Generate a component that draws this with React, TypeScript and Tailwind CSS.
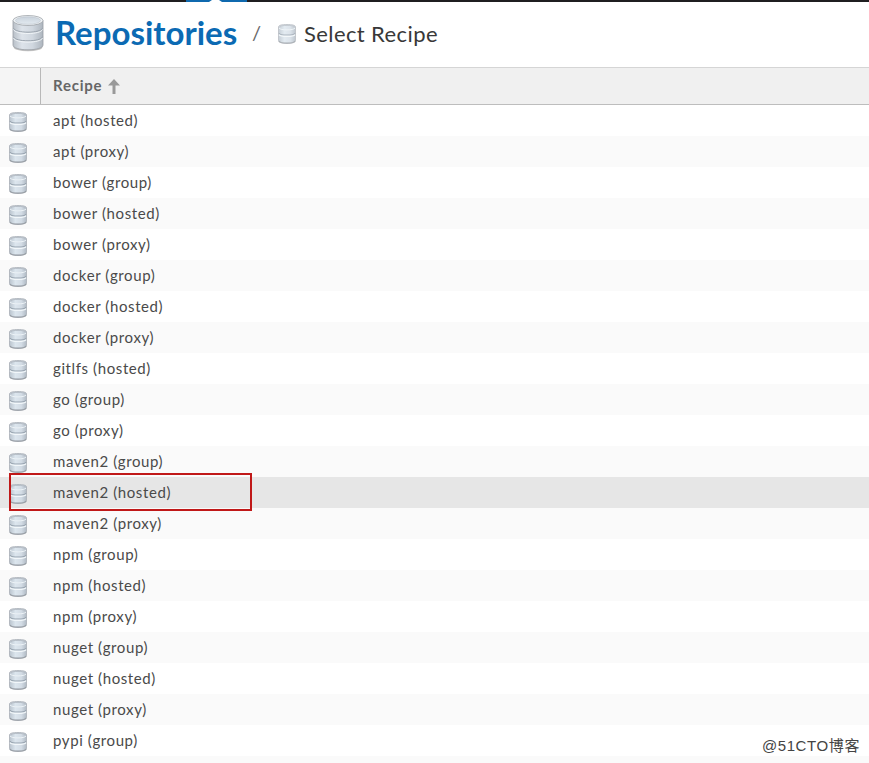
import React from 'react'

const recipes = [
  'apt (hosted)',
  'apt (proxy)',
  'bower (group)',
  'bower (hosted)',
  'bower (proxy)',
  'docker (group)',
  'docker (hosted)',
  'docker (proxy)',
  'gitlfs (hosted)',
  'go (group)',
  'go (proxy)',
  'maven2 (group)',
  'maven2 (hosted)',
  'maven2 (proxy)',
  'npm (group)',
  'npm (hosted)',
  'npm (proxy)',
  'nuget (group)',
  'nuget (hosted)',
  'nuget (proxy)',
  'pypi (group)',
]

const selected = 'maven2 (hosted)'

const DatabaseLarge: React.FC = () => (
  <svg className="h-[38px] w-8 shrink-0" viewBox="0 0 32 38" fill="none">
    <defs>
      <linearGradient id="db-side" x1="0" x2="1" y1="0" y2="0">
        <stop offset="0" stopColor="#b9c0c8" />
        <stop offset="0.3" stopColor="#dde3ea" />
        <stop offset="0.65" stopColor="#d0d7df" />
        <stop offset="1" stopColor="#adb5be" />
      </linearGradient>
      <linearGradient id="db-top" x1="0" x2="0" y1="0" y2="1">
        <stop offset="0" stopColor="#c8d2dc" />
        <stop offset="1" stopColor="#e3eaf0" />
      </linearGradient>
    </defs>
    <ellipse cx="16" cy="33" rx="14.5" ry="4.3" fill="#777" opacity="0.45" />
    <path d="M1 6.5v24.5c0 3 6.5 4.8 15 4.8s15-1.8 15-4.8V6.5z" fill="url(#db-side)" stroke="#989da3" strokeWidth="0.8" />
    <path d="M1.5 14.2c1 2.5 7 4 14.5 4s13.5-1.5 14.5-4M1.5 22.8c1 2.5 7 4 14.5 4s13.5-1.5 14.5-4" stroke="#9aa3ad" />
    <path d="M1.5 15.5c1 2.5 7 4 14.5 4s13.5-1.5 14.5-4M1.5 24.1c1 2.5 7 4 14.5 4s13.5-1.5 14.5-4" stroke="#f1f5f8" />
    <ellipse cx="16" cy="6.5" rx="15" ry="5" fill="#eef2f5" stroke="#a0a5aa" strokeWidth="0.8" />
    <ellipse cx="16" cy="6.5" rx="12.5" ry="3.7" fill="url(#db-top)" stroke="#b4bdc6" strokeWidth="0.5" />
  </svg>
)

const DatabaseSmall: React.FC<{ faded?: boolean }> = ({ faded }) => (
  <svg className={faded ? 'h-5 w-[18px] shrink-0 opacity-80' : 'h-5 w-[18px] shrink-0'} viewBox="0 0 18 20" fill="none">
    <defs>
      <linearGradient id="db-small" x1="0" x2="1" y1="0" y2="0">
        <stop offset="0" stopColor="#b9c3cd" />
        <stop offset="0.35" stopColor="#dce6ee" />
        <stop offset="0.7" stopColor="#d3dce5" />
        <stop offset="1" stopColor="#b0bac4" />
      </linearGradient>
    </defs>
    <path d="M.5 3C.5 1.2 4 .5 9 .5s8.5.7 8.5 2.5v13.5c0 2-3.5 2.9-8.5 2.9S.5 18.500.5 16.500z" fill="url(#db-small)" stroke="#a9afb6" strokeWidth="0.8" />
    <path d="M2 2.6C3.5 1.6 6 1.4 9 1.4s5.500.2 7 1.200" stroke="#b5bdc6" />
    <path d="M1 4c1 1.3 4 1.9 8 1.9S16 5.3 17 4" stroke="#edf3f7" />
    <path d="M1 9.2c.8 1.3 4 1.8 8 1.8s7.2-.5 8-1.8" stroke="#96a2ae" strokeWidth="1.2" />
    <path d="M1 10.6c.8 1.3 4 1.8 8 1.8s7.2-.5 8-1.8" stroke="#f2f7fa" strokeWidth="1.1" />
    <path d="M1 16.9c.5 1.6 3.6 2.3 8 2.3s7.5-.7 8-2.3" stroke="#989ea5" strokeWidth="1.2" />
  </svg>
)

const App: React.FC = () => {
  return (
    <div className="relative h-[763px] w-[869px] overflow-hidden bg-white font-['Lato',sans-serif] text-[#4a4a4a]">
      {/* Bottom edge of the application header */}
      <div className="flex h-0.5 bg-[#1f1e20] pl-[186px]">
        <svg className="h-0.5 w-[61px]" viewBox="0 0 61 2">
          <path d="M0 0h61v2H0z" fill="#0f69ae" />
          <path d="M26 0h7l3 2H23z" fill="#fff" />
        </svg>
      </div>

      <header className="flex h-[65px] items-center pb-[3px] pl-3">
        <DatabaseLarge />
        <h1 className="ml-[11px] w-[182px] pb-px text-[33px] leading-none font-bold whitespace-nowrap text-[#0b6ab3]">Repositories</h1>
        <span className="ml-[15px] w-2 pb-[3px] text-[20px] leading-none text-[#666]">/</span>
        <div className="ml-[18px] flex items-center pt-0.5">
          <DatabaseSmall faded />
          <h2 className="ml-2 text-[22px] leading-none tracking-[0.4px] whitespace-nowrap text-[#383838]">Select Recipe</h2>
        </div>
      </header>

      <div className="flex h-[38px] border-t border-b border-t-[#d5d5d5] border-b-[#bdbdbd] bg-[#f0f0f0]">
        <div className="w-[41px] border-r border-[#b8b8b8] bg-[#f5f5f5]" />
        <div className="flex items-center pl-3 text-[15px] font-bold text-[#666]">
          <span className="pb-0.5 tracking-[0.75px]">Recipe</span>
          <svg className="ml-1.5 h-[15px] w-3" viewBox="0 0 12 15" fill="#999">
            <path d="M6 0l6 6.5H7.5V15h-3V6.5H0z" />
          </svg>
        </div>
      </div>

      <ul>
        {recipes.map((recipe) => (
          <li
            key={recipe}
            className={
              recipe === selected
                ? 'flex h-[31px] items-center bg-[#e6e6e6] pl-[9px]'
                : 'flex h-[31px] items-center pl-[9px] even:bg-[#fafafa]'
            }
          >
            <span className="pt-[3px]">
              <DatabaseSmall />
            </span>
            <span className="ml-[26px] pb-0.5 text-[15px] leading-5 tracking-[0.6px]">{recipe}</span>
          </li>
        ))}
        <li className="h-[31px] bg-[#fafafa]" />
      </ul>

      {/* Highlight around the selected recipe */}
      <div className="absolute top-[473px] left-[9px] h-[38px] w-[243px] border-2 border-[#c01818]" />

      <div className="absolute right-[9px] bottom-[7px] font-['Liberation_Sans','Noto_Sans_CJK_SC',sans-serif] text-[15px] leading-5 tracking-[0.6px] text-[#444]">
        @51CTO博客
      </div>
    </div>
  )
}

export default App
